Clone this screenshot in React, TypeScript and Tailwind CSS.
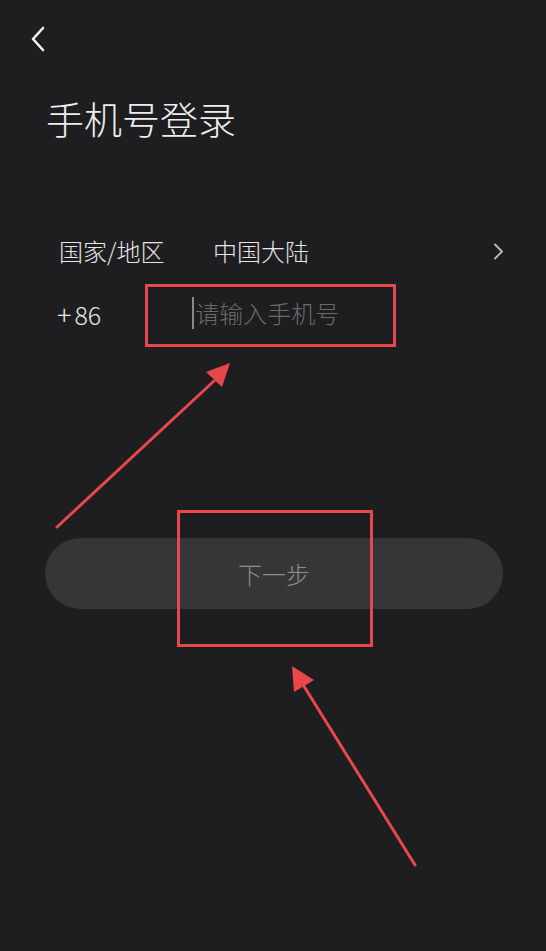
const font = { fontFamily: '"Noto Sans CJK SC", "Noto Sans", sans-serif' }

function ChevronLeft() {
  return (
    <svg width="14" height="26" viewBox="0 0 14 26" fill="none">
      <polyline points="12,2 2,13 12,24" stroke="#f2f2f2" strokeWidth="2.6" strokeLinecap="round" strokeLinejoin="round" />
    </svg>
  )
}

function ChevronRight() {
  return (
    <svg width="11" height="17" viewBox="0 0 11 17" fill="none">
      <polyline points="2,1.5 9,8.5 2,15.5" stroke="#bdbdbd" strokeWidth="1.8" strokeLinecap="round" strokeLinejoin="round" />
    </svg>
  )
}

// red annotation arrows drawn over the page
function Arrows() {
  return (
    <svg className="pointer-events-none absolute left-0 top-0" width="546" height="951" viewBox="0 0 546 951">
      <line x1="57" y1="527" x2="214" y2="381" stroke="#e8484b" strokeWidth="3" strokeLinecap="round" />
      <polygon points="230,363 206,372 222,387" fill="#e8484b" />
      <line x1="415" y1="865" x2="302" y2="683" stroke="#e8484b" strokeWidth="3" strokeLinecap="round" />
      <polygon points="292,666 314,680 294,692" fill="#e8484b" />
    </svg>
  )
}

export default function App() {
  return (
    <div className="relative min-h-[951px] w-full overflow-hidden bg-[#1e1d1f]" style={font}>
      <div className="pl-[31px] pt-[26px]">
        <ChevronLeft />
      </div>

      <h1 className="ml-[46px] mt-[47px] text-[38px] leading-none font-light text-[#ededed]">手机号登录</h1>

      <div className="mt-[102px] flex items-center pl-[59px] pr-[42px] text-[24px] leading-none font-light text-[#e6e6e6]">
        <span className="w-[154px]">国家/地区</span>
        <span className="flex-1">中国大陆</span>
        <ChevronRight />
      </div>

      <div className="mt-[34px] flex items-center pl-[57px]">
        <span className="flex items-baseline font-light text-[#e6e6e6]">
          <span className="mr-[3px] text-[27px] leading-none">+</span>
          <span className="text-[25px] leading-none">86</span>
        </span>
        <div className="ml-[91px] flex items-center">
          <span className="mr-[1px] h-[32px] w-[2px] bg-[#8a8a8a]" />
          <span className="text-[24px] leading-none font-light text-[#6a6a6a]">请输入手机号</span>
        </div>
      </div>

      <div className="ml-[45px] mr-[43px] mt-[209px] flex h-[71px] items-center justify-center rounded-full bg-[#363537]">
        <span className="text-[24px] font-light text-[#8e8e8e]">下一步</span>
      </div>

      {/* annotation boxes */}
      <div className="absolute left-[145px] top-[284px] h-[63px] w-[251px] border-[3px] border-[#e8484b]" />
      <div className="absolute left-[177px] top-[510px] h-[137px] w-[196px] border-[3px] border-[#e8484b]" />
      <Arrows />
    </div>
  )
}
